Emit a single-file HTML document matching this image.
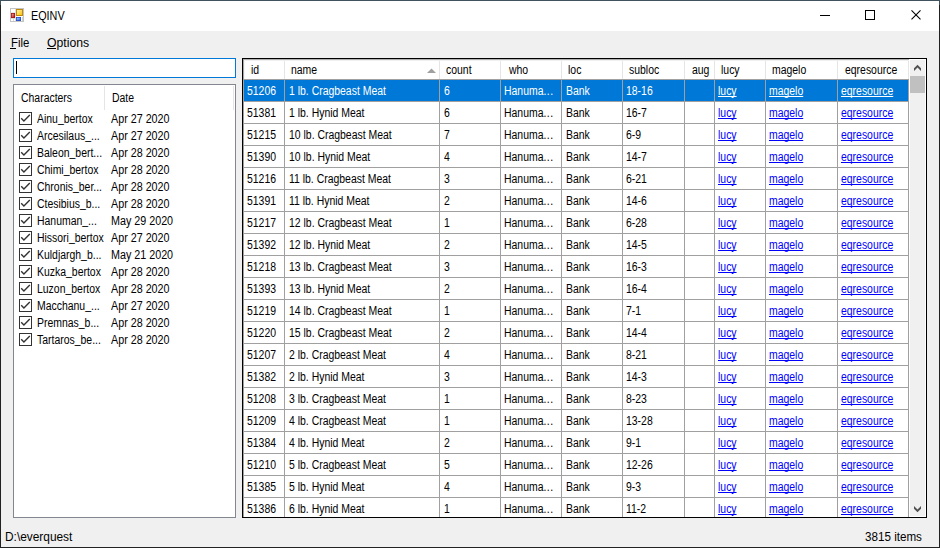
<!DOCTYPE html>
<html><head><meta charset="utf-8"><style>
html,body{margin:0;padding:0;}
body{width:940px;height:548px;overflow:hidden;position:relative;background:#f0f0f0;font-family:"Liberation Sans",sans-serif;}
.b{position:absolute;display:block}
.u{position:relative;top:-1px}
.t{position:absolute;font-size:12px;line-height:12px;white-space:nowrap;color:#000;transform:scaleX(0.87);transform-origin:0 0;text-decoration-skip-ink:none;}
</style></head><body>
<div class="b" style="left:0px;top:0px;width:940px;height:31px;background:#fff;"></div>
<div class="b" style="left:0px;top:0px;width:940px;height:1px;background:#41525f;"></div>
<div class="b" style="left:0px;top:1px;width:1px;height:4px;background:#41525f;"></div>
<div class="b" style="left:939px;top:1px;width:1px;height:4px;background:#41525f;"></div>
<div class="b" style="left:0px;top:5px;width:1px;height:543px;background:#222;"></div>
<div class="b" style="left:939px;top:5px;width:1px;height:543px;background:#222;"></div>
<div class="b" style="left:0px;top:547px;width:940px;height:1px;background:#222;"></div>
<svg class="b" style="left:10px;top:8px" width="14" height="14" viewBox="0 0 14 14">
<defs><linearGradient id="gg" x1="0" y1="0" x2="1" y2="1"><stop offset="0" stop-color="#fff2b0"/><stop offset="1" stop-color="#ffc400"/></linearGradient>
<linearGradient id="bg" x1="0" y1="0" x2="1" y2="1"><stop offset="0" stop-color="#a8c8ff"/><stop offset="1" stop-color="#3a6ee0"/></linearGradient>
<linearGradient id="rg" x1="0" y1="0" x2="1" y2="1"><stop offset="0" stop-color="#f4a0a0"/><stop offset="1" stop-color="#c01818"/></linearGradient></defs>
<rect x="0.5" y="0.5" width="13" height="13" fill="#fff" stroke="#c4c4c4"/>
<rect x="1" y="4.5" width="4" height="0.8" fill="#d8d8d8"/>
<rect x="5" y="1" width="1" height="12" fill="#e0e0e0"/>
<rect x="1" y="10" width="4" height="0.8" fill="#d8d8d8"/><rect x="3" y="10" width="0.8" height="3" fill="#d8d8d8"/>
<rect x="1" y="5" width="4" height="5" fill="#a81410"/><rect x="1.8" y="5.8" width="2.4" height="3.4" fill="url(#rg)"/>
<rect x="6" y="1" width="7" height="7" fill="#c08a08"/><rect x="7" y="2" width="5" height="5" fill="url(#gg)"/>
<rect x="6" y="9" width="5" height="4" fill="#2850c0"/><rect x="6.8" y="9.8" width="3.4" height="2.4" fill="url(#bg)"/>
<rect x="12" y="9" width="1" height="4" fill="#d0d0d0"/>
</svg>
<div class="t" style="left:31px;top:10px;transform:scaleX(0.9);">EQINV</div>
<div class="b" style="left:820px;top:15px;width:10px;height:1px;background:#000;"></div>
<div class="b" style="left:865px;top:10px;width:10px;height:10px;background:transparent;border:1px solid #000;box-sizing:border-box"></div>
<svg class="b" style="left:910px;top:9px" width="12" height="12" viewBox="0 0 12 12"><path d="M1.5 1.4L10.5 10.4M10.5 1.4L1.5 10.4" stroke="#000" stroke-width="1.1" fill="none"/></svg>
<div class="t" style="left:11px;top:37px;transform:scaleX(0.95);">File</div>
<div class="b" style="left:10px;top:48px;width:6px;height:1px;background:#000;"></div>
<div class="t" style="left:47px;top:37px;transform:scaleX(1.02);">Options</div>
<div class="b" style="left:47px;top:48px;width:9px;height:1px;background:#000;"></div>
<div class="b" style="left:13px;top:58px;width:223px;height:20px;background:#fff;border:1px solid #0078d7;box-sizing:border-box"></div>
<div class="b" style="left:16px;top:61px;width:1px;height:13px;background:#000;"></div>
<div class="b" style="left:13px;top:84px;width:223px;height:434px;background:#fff;border:1px solid #828790;box-sizing:border-box"></div>
<div class="b" style="left:104px;top:86px;width:1px;height:24px;background:#e5e5e5;"></div>
<div class="b" style="left:233px;top:86px;width:1px;height:24px;background:#e5e5e5;"></div>
<div class="t" style="left:21px;top:92px;">Characters</div>
<div class="t" style="left:112px;top:92px;">Date</div>
<svg class="b" style="left:19px;top:112px" width="13" height="13" viewBox="0 0 13 13"><rect x="0.5" y="0.5" width="12" height="12" fill="#fff" stroke="#333"/><path d="M2.2 6.3L4.9 9.0L10.8 3.1" stroke="#333" stroke-width="1.4" fill="none"/></svg>
<div class="t" style="left:37px;top:113px;">Ainu<span class="u">_</span>bertox</div>
<div class="t" style="left:111px;top:113px;transform:scaleX(0.895);">Apr 27 2020</div>
<svg class="b" style="left:19px;top:129px" width="13" height="13" viewBox="0 0 13 13"><rect x="0.5" y="0.5" width="12" height="12" fill="#fff" stroke="#333"/><path d="M2.2 6.3L4.9 9.0L10.8 3.1" stroke="#333" stroke-width="1.4" fill="none"/></svg>
<div class="t" style="left:37px;top:130px;">Arcesilaus<span class="u">_</span>...</div>
<div class="t" style="left:111px;top:130px;transform:scaleX(0.895);">Apr 27 2020</div>
<svg class="b" style="left:19px;top:146px" width="13" height="13" viewBox="0 0 13 13"><rect x="0.5" y="0.5" width="12" height="12" fill="#fff" stroke="#333"/><path d="M2.2 6.3L4.9 9.0L10.8 3.1" stroke="#333" stroke-width="1.4" fill="none"/></svg>
<div class="t" style="left:37px;top:147px;">Baleon<span class="u">_</span>bert...</div>
<div class="t" style="left:111px;top:147px;transform:scaleX(0.895);">Apr 28 2020</div>
<svg class="b" style="left:19px;top:163px" width="13" height="13" viewBox="0 0 13 13"><rect x="0.5" y="0.5" width="12" height="12" fill="#fff" stroke="#333"/><path d="M2.2 6.3L4.9 9.0L10.8 3.1" stroke="#333" stroke-width="1.4" fill="none"/></svg>
<div class="t" style="left:37px;top:164px;">Chimi<span class="u">_</span>bertox</div>
<div class="t" style="left:111px;top:164px;transform:scaleX(0.895);">Apr 28 2020</div>
<svg class="b" style="left:19px;top:180px" width="13" height="13" viewBox="0 0 13 13"><rect x="0.5" y="0.5" width="12" height="12" fill="#fff" stroke="#333"/><path d="M2.2 6.3L4.9 9.0L10.8 3.1" stroke="#333" stroke-width="1.4" fill="none"/></svg>
<div class="t" style="left:37px;top:181px;">Chronis<span class="u">_</span>ber...</div>
<div class="t" style="left:111px;top:181px;transform:scaleX(0.895);">Apr 28 2020</div>
<svg class="b" style="left:19px;top:197px" width="13" height="13" viewBox="0 0 13 13"><rect x="0.5" y="0.5" width="12" height="12" fill="#fff" stroke="#333"/><path d="M2.2 6.3L4.9 9.0L10.8 3.1" stroke="#333" stroke-width="1.4" fill="none"/></svg>
<div class="t" style="left:37px;top:198px;">Ctesibius<span class="u">_</span>b...</div>
<div class="t" style="left:111px;top:198px;transform:scaleX(0.895);">Apr 28 2020</div>
<svg class="b" style="left:19px;top:214px" width="13" height="13" viewBox="0 0 13 13"><rect x="0.5" y="0.5" width="12" height="12" fill="#fff" stroke="#333"/><path d="M2.2 6.3L4.9 9.0L10.8 3.1" stroke="#333" stroke-width="1.4" fill="none"/></svg>
<div class="t" style="left:37px;top:215px;">Hanuman<span class="u">_</span>...</div>
<div class="t" style="left:111px;top:215px;transform:scaleX(0.895);">May 29 2020</div>
<svg class="b" style="left:19px;top:231px" width="13" height="13" viewBox="0 0 13 13"><rect x="0.5" y="0.5" width="12" height="12" fill="#fff" stroke="#333"/><path d="M2.2 6.3L4.9 9.0L10.8 3.1" stroke="#333" stroke-width="1.4" fill="none"/></svg>
<div class="t" style="left:37px;top:232px;">Hissori<span class="u">_</span>bertox</div>
<div class="t" style="left:111px;top:232px;transform:scaleX(0.895);">Apr 27 2020</div>
<svg class="b" style="left:19px;top:248px" width="13" height="13" viewBox="0 0 13 13"><rect x="0.5" y="0.5" width="12" height="12" fill="#fff" stroke="#333"/><path d="M2.2 6.3L4.9 9.0L10.8 3.1" stroke="#333" stroke-width="1.4" fill="none"/></svg>
<div class="t" style="left:37px;top:249px;">Kuldjargh<span class="u">_</span>b...</div>
<div class="t" style="left:111px;top:249px;transform:scaleX(0.895);">May 21 2020</div>
<svg class="b" style="left:19px;top:265px" width="13" height="13" viewBox="0 0 13 13"><rect x="0.5" y="0.5" width="12" height="12" fill="#fff" stroke="#333"/><path d="M2.2 6.3L4.9 9.0L10.8 3.1" stroke="#333" stroke-width="1.4" fill="none"/></svg>
<div class="t" style="left:37px;top:266px;">Kuzka<span class="u">_</span>bertox</div>
<div class="t" style="left:111px;top:266px;transform:scaleX(0.895);">Apr 28 2020</div>
<svg class="b" style="left:19px;top:282px" width="13" height="13" viewBox="0 0 13 13"><rect x="0.5" y="0.5" width="12" height="12" fill="#fff" stroke="#333"/><path d="M2.2 6.3L4.9 9.0L10.8 3.1" stroke="#333" stroke-width="1.4" fill="none"/></svg>
<div class="t" style="left:37px;top:283px;">Luzon<span class="u">_</span>bertox</div>
<div class="t" style="left:111px;top:283px;transform:scaleX(0.895);">Apr 28 2020</div>
<svg class="b" style="left:19px;top:299px" width="13" height="13" viewBox="0 0 13 13"><rect x="0.5" y="0.5" width="12" height="12" fill="#fff" stroke="#333"/><path d="M2.2 6.3L4.9 9.0L10.8 3.1" stroke="#333" stroke-width="1.4" fill="none"/></svg>
<div class="t" style="left:37px;top:300px;">Macchanu<span class="u">_</span>...</div>
<div class="t" style="left:111px;top:300px;transform:scaleX(0.895);">Apr 27 2020</div>
<svg class="b" style="left:19px;top:316px" width="13" height="13" viewBox="0 0 13 13"><rect x="0.5" y="0.5" width="12" height="12" fill="#fff" stroke="#333"/><path d="M2.2 6.3L4.9 9.0L10.8 3.1" stroke="#333" stroke-width="1.4" fill="none"/></svg>
<div class="t" style="left:37px;top:317px;">Premnas<span class="u">_</span>b...</div>
<div class="t" style="left:111px;top:317px;transform:scaleX(0.895);">Apr 28 2020</div>
<svg class="b" style="left:19px;top:333px" width="13" height="13" viewBox="0 0 13 13"><rect x="0.5" y="0.5" width="12" height="12" fill="#fff" stroke="#333"/><path d="M2.2 6.3L4.9 9.0L10.8 3.1" stroke="#333" stroke-width="1.4" fill="none"/></svg>
<div class="t" style="left:37px;top:334px;">Tartaros<span class="u">_</span>be...</div>
<div class="t" style="left:111px;top:334px;transform:scaleX(0.895);">Apr 28 2020</div>
<div class="b" style="left:242px;top:58px;width:685px;height:460px;background:#fff;border:1px solid #000;box-sizing:border-box"></div>
<div class="b" style="left:284px;top:61px;width:1px;height:18px;background:#e5e5e5;"></div>
<div class="b" style="left:439px;top:61px;width:1px;height:18px;background:#e5e5e5;"></div>
<div class="b" style="left:500px;top:61px;width:1px;height:18px;background:#e5e5e5;"></div>
<div class="b" style="left:561px;top:61px;width:1px;height:18px;background:#e5e5e5;"></div>
<div class="b" style="left:622px;top:61px;width:1px;height:18px;background:#e5e5e5;"></div>
<div class="b" style="left:684px;top:61px;width:1px;height:18px;background:#e5e5e5;"></div>
<div class="b" style="left:714px;top:61px;width:1px;height:18px;background:#e5e5e5;"></div>
<div class="b" style="left:765px;top:61px;width:1px;height:18px;background:#e5e5e5;"></div>
<div class="b" style="left:837px;top:61px;width:1px;height:18px;background:#e5e5e5;"></div>
<div class="b" style="left:908px;top:61px;width:1px;height:18px;background:#e5e5e5;"></div>
<div class="b" style="left:243px;top:79px;width:666px;height:1px;background:#a0a0a0;"></div>
<div class="b" style="left:243px;top:59px;width:666px;height:1px;background:#b0b0b0;"></div>
<div class="b" style="left:244px;top:60px;width:665px;height:1px;background:#f0f0f0;"></div>
<div class="b" style="left:243px;top:59px;width:1px;height:20px;background:#a8a8a8;"></div>
<div class="b" style="left:244px;top:60px;width:1px;height:19px;background:#f4f4f4;"></div>
<div class="t" style="left:251px;top:64px;">id</div>
<div class="t" style="left:291px;top:64px;">name</div>
<div class="t" style="left:446px;top:64px;">count</div>
<div class="t" style="left:509px;top:64px;">who</div>
<div class="t" style="left:568px;top:64px;">loc</div>
<div class="t" style="left:629px;top:64px;">subloc</div>
<div class="t" style="left:692px;top:64px;">aug</div>
<div class="t" style="left:721px;top:64px;">lucy</div>
<div class="t" style="left:772px;top:64px;">magelo</div>
<div class="t" style="left:845px;top:64px;">eqresource</div>
<svg class="b" style="left:427px;top:68px" width="10" height="5" viewBox="0 0 10 5"><path d="M0 5L4.5 0.5L9 5Z" fill="#a0a0a0"/></svg>
<div class="b" style="left:244px;top:80px;width:664px;height:21px;background:#0078d7;"></div>
<div class="b" style="left:243px;top:101px;width:666px;height:1px;background:#a0a0a0;"></div>
<div class="t" style="left:247px;top:85px;color:#fff">51206</div>
<div class="t" style="left:289px;top:85px;color:#fff">1 lb. Cragbeast Meat</div>
<div class="t" style="left:444px;top:85px;color:#fff">6</div>
<div class="t" style="left:504px;top:85px;color:#fff">Hanuma<span style="letter-spacing:.5px">..</span>.</div>
<div class="t" style="left:566px;top:85px;color:#fff">Bank</div>
<div class="t" style="left:626px;top:85px;color:#fff">18-16</div>
<div class="t" style="left:718px;top:85px;color:#fff;text-decoration:underline">lucy</div>
<div class="t" style="left:769px;top:85px;color:#fff;text-decoration:underline">magelo</div>
<div class="t" style="left:841px;top:85px;color:#fff;text-decoration:underline">eqresource</div>
<div class="b" style="left:243px;top:123px;width:666px;height:1px;background:#a0a0a0;"></div>
<div class="t" style="left:247px;top:107px;color:#000">51381</div>
<div class="t" style="left:289px;top:107px;color:#000">1 lb. Hynid Meat</div>
<div class="t" style="left:444px;top:107px;color:#000">6</div>
<div class="t" style="left:504px;top:107px;color:#000">Hanuma<span style="letter-spacing:.5px">..</span>.</div>
<div class="t" style="left:566px;top:107px;color:#000">Bank</div>
<div class="t" style="left:626px;top:107px;color:#000">16-7</div>
<div class="t" style="left:718px;top:107px;color:#0000ff;text-decoration:underline">lucy</div>
<div class="t" style="left:769px;top:107px;color:#0000ff;text-decoration:underline">magelo</div>
<div class="t" style="left:841px;top:107px;color:#0000ff;text-decoration:underline">eqresource</div>
<div class="b" style="left:243px;top:145px;width:666px;height:1px;background:#a0a0a0;"></div>
<div class="t" style="left:247px;top:129px;color:#000">51215</div>
<div class="t" style="left:289px;top:129px;color:#000">10 lb. Cragbeast Meat</div>
<div class="t" style="left:444px;top:129px;color:#000">7</div>
<div class="t" style="left:504px;top:129px;color:#000">Hanuma<span style="letter-spacing:.5px">..</span>.</div>
<div class="t" style="left:566px;top:129px;color:#000">Bank</div>
<div class="t" style="left:626px;top:129px;color:#000">6-9</div>
<div class="t" style="left:718px;top:129px;color:#0000ff;text-decoration:underline">lucy</div>
<div class="t" style="left:769px;top:129px;color:#0000ff;text-decoration:underline">magelo</div>
<div class="t" style="left:841px;top:129px;color:#0000ff;text-decoration:underline">eqresource</div>
<div class="b" style="left:243px;top:167px;width:666px;height:1px;background:#a0a0a0;"></div>
<div class="t" style="left:247px;top:151px;color:#000">51390</div>
<div class="t" style="left:289px;top:151px;color:#000">10 lb. Hynid Meat</div>
<div class="t" style="left:444px;top:151px;color:#000">4</div>
<div class="t" style="left:504px;top:151px;color:#000">Hanuma<span style="letter-spacing:.5px">..</span>.</div>
<div class="t" style="left:566px;top:151px;color:#000">Bank</div>
<div class="t" style="left:626px;top:151px;color:#000">14-7</div>
<div class="t" style="left:718px;top:151px;color:#0000ff;text-decoration:underline">lucy</div>
<div class="t" style="left:769px;top:151px;color:#0000ff;text-decoration:underline">magelo</div>
<div class="t" style="left:841px;top:151px;color:#0000ff;text-decoration:underline">eqresource</div>
<div class="b" style="left:243px;top:189px;width:666px;height:1px;background:#a0a0a0;"></div>
<div class="t" style="left:247px;top:173px;color:#000">51216</div>
<div class="t" style="left:289px;top:173px;color:#000">11 lb. Cragbeast Meat</div>
<div class="t" style="left:444px;top:173px;color:#000">3</div>
<div class="t" style="left:504px;top:173px;color:#000">Hanuma<span style="letter-spacing:.5px">..</span>.</div>
<div class="t" style="left:566px;top:173px;color:#000">Bank</div>
<div class="t" style="left:626px;top:173px;color:#000">6-21</div>
<div class="t" style="left:718px;top:173px;color:#0000ff;text-decoration:underline">lucy</div>
<div class="t" style="left:769px;top:173px;color:#0000ff;text-decoration:underline">magelo</div>
<div class="t" style="left:841px;top:173px;color:#0000ff;text-decoration:underline">eqresource</div>
<div class="b" style="left:243px;top:211px;width:666px;height:1px;background:#a0a0a0;"></div>
<div class="t" style="left:247px;top:195px;color:#000">51391</div>
<div class="t" style="left:289px;top:195px;color:#000">11 lb. Hynid Meat</div>
<div class="t" style="left:444px;top:195px;color:#000">2</div>
<div class="t" style="left:504px;top:195px;color:#000">Hanuma<span style="letter-spacing:.5px">..</span>.</div>
<div class="t" style="left:566px;top:195px;color:#000">Bank</div>
<div class="t" style="left:626px;top:195px;color:#000">14-6</div>
<div class="t" style="left:718px;top:195px;color:#0000ff;text-decoration:underline">lucy</div>
<div class="t" style="left:769px;top:195px;color:#0000ff;text-decoration:underline">magelo</div>
<div class="t" style="left:841px;top:195px;color:#0000ff;text-decoration:underline">eqresource</div>
<div class="b" style="left:243px;top:233px;width:666px;height:1px;background:#a0a0a0;"></div>
<div class="t" style="left:247px;top:217px;color:#000">51217</div>
<div class="t" style="left:289px;top:217px;color:#000">12 lb. Cragbeast Meat</div>
<div class="t" style="left:444px;top:217px;color:#000">1</div>
<div class="t" style="left:504px;top:217px;color:#000">Hanuma<span style="letter-spacing:.5px">..</span>.</div>
<div class="t" style="left:566px;top:217px;color:#000">Bank</div>
<div class="t" style="left:626px;top:217px;color:#000">6-28</div>
<div class="t" style="left:718px;top:217px;color:#0000ff;text-decoration:underline">lucy</div>
<div class="t" style="left:769px;top:217px;color:#0000ff;text-decoration:underline">magelo</div>
<div class="t" style="left:841px;top:217px;color:#0000ff;text-decoration:underline">eqresource</div>
<div class="b" style="left:243px;top:255px;width:666px;height:1px;background:#a0a0a0;"></div>
<div class="t" style="left:247px;top:239px;color:#000">51392</div>
<div class="t" style="left:289px;top:239px;color:#000">12 lb. Hynid Meat</div>
<div class="t" style="left:444px;top:239px;color:#000">2</div>
<div class="t" style="left:504px;top:239px;color:#000">Hanuma<span style="letter-spacing:.5px">..</span>.</div>
<div class="t" style="left:566px;top:239px;color:#000">Bank</div>
<div class="t" style="left:626px;top:239px;color:#000">14-5</div>
<div class="t" style="left:718px;top:239px;color:#0000ff;text-decoration:underline">lucy</div>
<div class="t" style="left:769px;top:239px;color:#0000ff;text-decoration:underline">magelo</div>
<div class="t" style="left:841px;top:239px;color:#0000ff;text-decoration:underline">eqresource</div>
<div class="b" style="left:243px;top:277px;width:666px;height:1px;background:#a0a0a0;"></div>
<div class="t" style="left:247px;top:261px;color:#000">51218</div>
<div class="t" style="left:289px;top:261px;color:#000">13 lb. Cragbeast Meat</div>
<div class="t" style="left:444px;top:261px;color:#000">3</div>
<div class="t" style="left:504px;top:261px;color:#000">Hanuma<span style="letter-spacing:.5px">..</span>.</div>
<div class="t" style="left:566px;top:261px;color:#000">Bank</div>
<div class="t" style="left:626px;top:261px;color:#000">16-3</div>
<div class="t" style="left:718px;top:261px;color:#0000ff;text-decoration:underline">lucy</div>
<div class="t" style="left:769px;top:261px;color:#0000ff;text-decoration:underline">magelo</div>
<div class="t" style="left:841px;top:261px;color:#0000ff;text-decoration:underline">eqresource</div>
<div class="b" style="left:243px;top:299px;width:666px;height:1px;background:#a0a0a0;"></div>
<div class="t" style="left:247px;top:283px;color:#000">51393</div>
<div class="t" style="left:289px;top:283px;color:#000">13 lb. Hynid Meat</div>
<div class="t" style="left:444px;top:283px;color:#000">2</div>
<div class="t" style="left:504px;top:283px;color:#000">Hanuma<span style="letter-spacing:.5px">..</span>.</div>
<div class="t" style="left:566px;top:283px;color:#000">Bank</div>
<div class="t" style="left:626px;top:283px;color:#000">16-4</div>
<div class="t" style="left:718px;top:283px;color:#0000ff;text-decoration:underline">lucy</div>
<div class="t" style="left:769px;top:283px;color:#0000ff;text-decoration:underline">magelo</div>
<div class="t" style="left:841px;top:283px;color:#0000ff;text-decoration:underline">eqresource</div>
<div class="b" style="left:243px;top:321px;width:666px;height:1px;background:#a0a0a0;"></div>
<div class="t" style="left:247px;top:305px;color:#000">51219</div>
<div class="t" style="left:289px;top:305px;color:#000">14 lb. Cragbeast Meat</div>
<div class="t" style="left:444px;top:305px;color:#000">1</div>
<div class="t" style="left:504px;top:305px;color:#000">Hanuma<span style="letter-spacing:.5px">..</span>.</div>
<div class="t" style="left:566px;top:305px;color:#000">Bank</div>
<div class="t" style="left:626px;top:305px;color:#000">7-1</div>
<div class="t" style="left:718px;top:305px;color:#0000ff;text-decoration:underline">lucy</div>
<div class="t" style="left:769px;top:305px;color:#0000ff;text-decoration:underline">magelo</div>
<div class="t" style="left:841px;top:305px;color:#0000ff;text-decoration:underline">eqresource</div>
<div class="b" style="left:243px;top:343px;width:666px;height:1px;background:#a0a0a0;"></div>
<div class="t" style="left:247px;top:327px;color:#000">51220</div>
<div class="t" style="left:289px;top:327px;color:#000">15 lb. Cragbeast Meat</div>
<div class="t" style="left:444px;top:327px;color:#000">2</div>
<div class="t" style="left:504px;top:327px;color:#000">Hanuma<span style="letter-spacing:.5px">..</span>.</div>
<div class="t" style="left:566px;top:327px;color:#000">Bank</div>
<div class="t" style="left:626px;top:327px;color:#000">14-4</div>
<div class="t" style="left:718px;top:327px;color:#0000ff;text-decoration:underline">lucy</div>
<div class="t" style="left:769px;top:327px;color:#0000ff;text-decoration:underline">magelo</div>
<div class="t" style="left:841px;top:327px;color:#0000ff;text-decoration:underline">eqresource</div>
<div class="b" style="left:243px;top:365px;width:666px;height:1px;background:#a0a0a0;"></div>
<div class="t" style="left:247px;top:349px;color:#000">51207</div>
<div class="t" style="left:289px;top:349px;color:#000">2 lb. Cragbeast Meat</div>
<div class="t" style="left:444px;top:349px;color:#000">4</div>
<div class="t" style="left:504px;top:349px;color:#000">Hanuma<span style="letter-spacing:.5px">..</span>.</div>
<div class="t" style="left:566px;top:349px;color:#000">Bank</div>
<div class="t" style="left:626px;top:349px;color:#000">8-21</div>
<div class="t" style="left:718px;top:349px;color:#0000ff;text-decoration:underline">lucy</div>
<div class="t" style="left:769px;top:349px;color:#0000ff;text-decoration:underline">magelo</div>
<div class="t" style="left:841px;top:349px;color:#0000ff;text-decoration:underline">eqresource</div>
<div class="b" style="left:243px;top:387px;width:666px;height:1px;background:#a0a0a0;"></div>
<div class="t" style="left:247px;top:371px;color:#000">51382</div>
<div class="t" style="left:289px;top:371px;color:#000">2 lb. Hynid Meat</div>
<div class="t" style="left:444px;top:371px;color:#000">3</div>
<div class="t" style="left:504px;top:371px;color:#000">Hanuma<span style="letter-spacing:.5px">..</span>.</div>
<div class="t" style="left:566px;top:371px;color:#000">Bank</div>
<div class="t" style="left:626px;top:371px;color:#000">14-3</div>
<div class="t" style="left:718px;top:371px;color:#0000ff;text-decoration:underline">lucy</div>
<div class="t" style="left:769px;top:371px;color:#0000ff;text-decoration:underline">magelo</div>
<div class="t" style="left:841px;top:371px;color:#0000ff;text-decoration:underline">eqresource</div>
<div class="b" style="left:243px;top:409px;width:666px;height:1px;background:#a0a0a0;"></div>
<div class="t" style="left:247px;top:393px;color:#000">51208</div>
<div class="t" style="left:289px;top:393px;color:#000">3 lb. Cragbeast Meat</div>
<div class="t" style="left:444px;top:393px;color:#000">1</div>
<div class="t" style="left:504px;top:393px;color:#000">Hanuma<span style="letter-spacing:.5px">..</span>.</div>
<div class="t" style="left:566px;top:393px;color:#000">Bank</div>
<div class="t" style="left:626px;top:393px;color:#000">8-23</div>
<div class="t" style="left:718px;top:393px;color:#0000ff;text-decoration:underline">lucy</div>
<div class="t" style="left:769px;top:393px;color:#0000ff;text-decoration:underline">magelo</div>
<div class="t" style="left:841px;top:393px;color:#0000ff;text-decoration:underline">eqresource</div>
<div class="b" style="left:243px;top:431px;width:666px;height:1px;background:#a0a0a0;"></div>
<div class="t" style="left:247px;top:415px;color:#000">51209</div>
<div class="t" style="left:289px;top:415px;color:#000">4 lb. Cragbeast Meat</div>
<div class="t" style="left:444px;top:415px;color:#000">1</div>
<div class="t" style="left:504px;top:415px;color:#000">Hanuma<span style="letter-spacing:.5px">..</span>.</div>
<div class="t" style="left:566px;top:415px;color:#000">Bank</div>
<div class="t" style="left:626px;top:415px;color:#000">13-28</div>
<div class="t" style="left:718px;top:415px;color:#0000ff;text-decoration:underline">lucy</div>
<div class="t" style="left:769px;top:415px;color:#0000ff;text-decoration:underline">magelo</div>
<div class="t" style="left:841px;top:415px;color:#0000ff;text-decoration:underline">eqresource</div>
<div class="b" style="left:243px;top:453px;width:666px;height:1px;background:#a0a0a0;"></div>
<div class="t" style="left:247px;top:437px;color:#000">51384</div>
<div class="t" style="left:289px;top:437px;color:#000">4 lb. Hynid Meat</div>
<div class="t" style="left:444px;top:437px;color:#000">2</div>
<div class="t" style="left:504px;top:437px;color:#000">Hanuma<span style="letter-spacing:.5px">..</span>.</div>
<div class="t" style="left:566px;top:437px;color:#000">Bank</div>
<div class="t" style="left:626px;top:437px;color:#000">9-1</div>
<div class="t" style="left:718px;top:437px;color:#0000ff;text-decoration:underline">lucy</div>
<div class="t" style="left:769px;top:437px;color:#0000ff;text-decoration:underline">magelo</div>
<div class="t" style="left:841px;top:437px;color:#0000ff;text-decoration:underline">eqresource</div>
<div class="b" style="left:243px;top:475px;width:666px;height:1px;background:#a0a0a0;"></div>
<div class="t" style="left:247px;top:459px;color:#000">51210</div>
<div class="t" style="left:289px;top:459px;color:#000">5 lb. Cragbeast Meat</div>
<div class="t" style="left:444px;top:459px;color:#000">5</div>
<div class="t" style="left:504px;top:459px;color:#000">Hanuma<span style="letter-spacing:.5px">..</span>.</div>
<div class="t" style="left:566px;top:459px;color:#000">Bank</div>
<div class="t" style="left:626px;top:459px;color:#000">12-26</div>
<div class="t" style="left:718px;top:459px;color:#0000ff;text-decoration:underline">lucy</div>
<div class="t" style="left:769px;top:459px;color:#0000ff;text-decoration:underline">magelo</div>
<div class="t" style="left:841px;top:459px;color:#0000ff;text-decoration:underline">eqresource</div>
<div class="b" style="left:243px;top:497px;width:666px;height:1px;background:#a0a0a0;"></div>
<div class="t" style="left:247px;top:481px;color:#000">51385</div>
<div class="t" style="left:289px;top:481px;color:#000">5 lb. Hynid Meat</div>
<div class="t" style="left:444px;top:481px;color:#000">4</div>
<div class="t" style="left:504px;top:481px;color:#000">Hanuma<span style="letter-spacing:.5px">..</span>.</div>
<div class="t" style="left:566px;top:481px;color:#000">Bank</div>
<div class="t" style="left:626px;top:481px;color:#000">9-3</div>
<div class="t" style="left:718px;top:481px;color:#0000ff;text-decoration:underline">lucy</div>
<div class="t" style="left:769px;top:481px;color:#0000ff;text-decoration:underline">magelo</div>
<div class="t" style="left:841px;top:481px;color:#0000ff;text-decoration:underline">eqresource</div>
<div class="t" style="left:247px;top:503px;color:#000">51386</div>
<div class="t" style="left:289px;top:503px;color:#000">6 lb. Hynid Meat</div>
<div class="t" style="left:444px;top:503px;color:#000">1</div>
<div class="t" style="left:504px;top:503px;color:#000">Hanuma<span style="letter-spacing:.5px">..</span>.</div>
<div class="t" style="left:566px;top:503px;color:#000">Bank</div>
<div class="t" style="left:626px;top:503px;color:#000">11-2</div>
<div class="t" style="left:718px;top:503px;color:#0000ff;text-decoration:underline">lucy</div>
<div class="t" style="left:769px;top:503px;color:#0000ff;text-decoration:underline">magelo</div>
<div class="t" style="left:841px;top:503px;color:#0000ff;text-decoration:underline">eqresource</div>
<div class="b" style="left:243px;top:80px;width:1px;height:437px;background:#a0a0a0;"></div>
<div class="b" style="left:284px;top:80px;width:1px;height:437px;background:#a0a0a0;"></div>
<div class="b" style="left:439px;top:80px;width:1px;height:437px;background:#a0a0a0;"></div>
<div class="b" style="left:500px;top:80px;width:1px;height:437px;background:#a0a0a0;"></div>
<div class="b" style="left:561px;top:80px;width:1px;height:437px;background:#a0a0a0;"></div>
<div class="b" style="left:622px;top:80px;width:1px;height:437px;background:#a0a0a0;"></div>
<div class="b" style="left:684px;top:80px;width:1px;height:437px;background:#a0a0a0;"></div>
<div class="b" style="left:714px;top:80px;width:1px;height:437px;background:#a0a0a0;"></div>
<div class="b" style="left:765px;top:80px;width:1px;height:437px;background:#a0a0a0;"></div>
<div class="b" style="left:837px;top:80px;width:1px;height:437px;background:#a0a0a0;"></div>
<div class="b" style="left:908px;top:80px;width:1px;height:437px;background:#a0a0a0;"></div>
<div class="b" style="left:909px;top:59px;width:17px;height:458px;background:#fff;"></div>
<div class="b" style="left:910px;top:60px;width:15px;height:456px;background:#f0f0f0;"></div>
<svg class="b" style="left:909px;top:59px" width="17" height="17" viewBox="909 59 17 17"><path d="M914 68.3L917.5 64.8L921 68.3L921 71L917.5 67.5L914 71Z" fill="#505050"/></svg>
<div class="b" style="left:910px;top:76px;width:15px;height:17px;background:#c0c0c0;"></div>
<svg class="b" style="left:909px;top:500px" width="17" height="17" viewBox="909 500 17 17"><path d="M914 506L917.5 509.5L921 506L921 508.7L917.5 512.2L914 508.7Z" fill="#505050"/></svg>
<div class="t" style="left:5px;top:531px;transform:scaleX(0.99);">D:\everquest</div>
<div class="t" style="left:865px;top:531px;transform:scaleX(0.97);">3815 items</div>
</body></html>
